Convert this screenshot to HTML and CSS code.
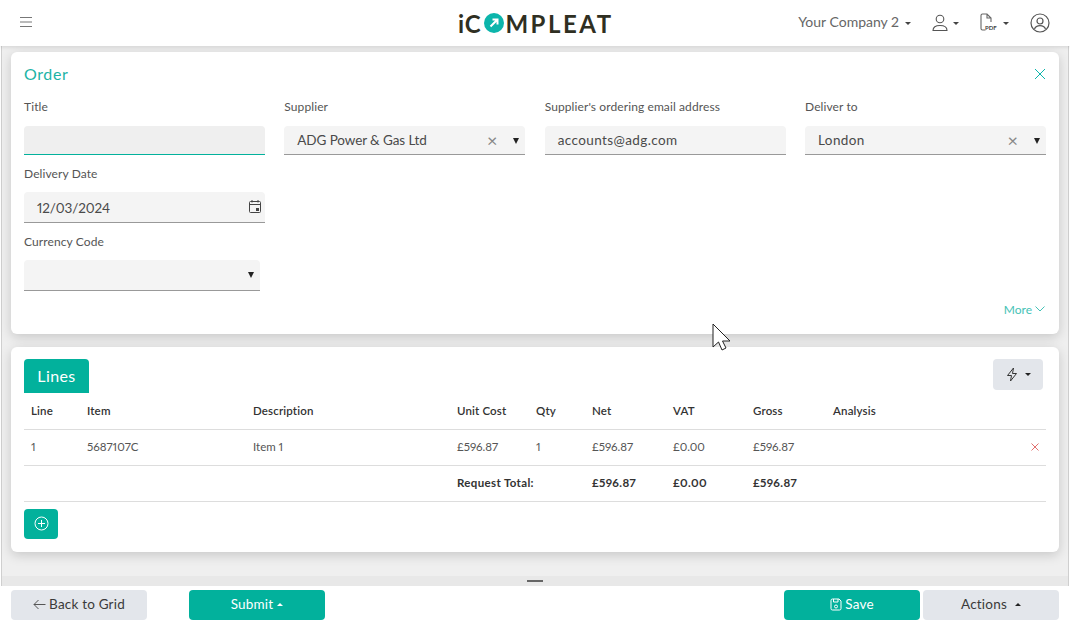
FILE: index.html
```html
<!DOCTYPE html>
<html lang="en">
<head>
<meta charset="utf-8">
<title>iCompleat Order</title>
<link rel="stylesheet" href="styles.css">
</head>
<body>
<header class="topbar">
  <svg class="menu-icon" width="14" height="12" viewBox="0 0 14 12"><path d="M1 1.500h12M1 6h12M1 10.500h12" stroke="#777" fill="none"/></svg>
  <div class="logo"><span class="logo-ic">iC</span><span class="logo-o"><svg width="20" height="20" viewBox="0 0 20 20"><circle cx="10" cy="10" r="10" fill="#0cb5ab"/><path d="M6.500 13.500 13 7M8.500 6.500H13.500V11.500" stroke="#fff" stroke-width="2" fill="none"/></svg></span><span>MPLEAT</span></div>
  <nav class="topnav">
    <span class="company">Your Company 2<i class="caret"></i></span>
    <span class="nav-icon nav-user"><svg width="16" height="18" viewBox="0 0 16 18"><circle cx="8" cy="5" r="3.800" fill="none" stroke="#555" stroke-width="1.100"/><path d="M1 16.500c0-3.500 2.500-5 7-5s7 1.500 7 5z" fill="none" stroke="#555" stroke-width="1.100"/></svg><i class="caret"></i></span>
    <span class="nav-icon nav-pdf"><svg width="16" height="19" viewBox="0 0 16 19"><path d="M6 17H2.500Q1 17 1 15.500V2.500Q1 1 2.500 1H7L11 5V9M7 1V5H11" fill="none" stroke="#666" stroke-width="1.100"/><rect x="5" y="12" width="10" height="5.500" fill="#fff"/></svg><b class="pdf-tag">PDF</b><i class="caret"></i></span>
    <svg class="profile" width="20" height="20" viewBox="0 0 20 20"><circle cx="10" cy="10" r="9" fill="none" stroke="#555" stroke-width="1.200"/><circle cx="10" cy="8" r="3" fill="none" stroke="#555" stroke-width="1.200"/><path d="M4.500 16c1-2.500 3-3.300 5.500-3.300s4.500.8 5.500 3.300" fill="none" stroke="#555" stroke-width="1.200"/></svg>
  </nav>
</header>

<main class="content">
  <section class="card card-order">
    <div class="card-head">
      <h2>Order</h2>
      <svg width="12" height="12" viewBox="0 0 12 12"><path d="M1 1l10 10M11 1L1 11" stroke="#0cb5ab" fill="none"/></svg>
    </div>
    <div class="fields">
      <div class="field">
        <label>Title</label>
        <div class="input input-active"></div>
      </div>
      <div class="field">
        <label>Supplier</label>
        <div class="input input-tight">ADG Power &amp; Gas Ltd<span class="clear">×</span><i class="select-arrow"></i></div>
      </div>
      <div class="field">
        <label>Supplier's ordering email address</label>
        <div class="input">accounts@adg.com</div>
      </div>
      <div class="field">
        <label>Deliver to</label>
        <div class="input">London<span class="clear">×</span><i class="select-arrow"></i></div>
      </div>
      <div class="field field-new-row">
        <label>Delivery Date</label>
        <div class="input input-tall input-tight">12/03/2024
          <svg class="calendar" width="12" height="13" viewBox="0 0 12 13"><rect x=".5" y="1.500" width="11" height="11" rx="1" fill="none" stroke="#444"/><path d="M.5 4.500h11M3 0v2.500M9 0v2.500" stroke="#444" fill="none"/><rect x="7" y="8" width="3" height="3" fill="#444"/></svg>
        </div>
      </div>
      <div class="field field-new-row field-narrow">
        <label>Currency Code</label>
        <div class="input input-tall"><i class="select-arrow"></i></div>
      </div>
    </div>
    <div class="more">More <svg width="10" height="6" viewBox="0 0 10 6"><path d="M.5.500 5 5 9.500.500" stroke="#45c2b6" fill="none"/></svg></div>
  </section>

  <section class="card card-lines">
    <div class="lines-head">
      <div class="tab">Lines</div>
      <button class="btn-flash" type="button">
        <svg width="12" height="15" viewBox="0 0 12 15"><path d="M7.500 1 1.500 8.500H5.500L4.500 14 10.500 6.500H6.500Z" fill="none" stroke="#333"/></svg><i class="caret caret-dark"></i>
      </button>
    </div>
    <table class="lines">
      <colgroup>
        <col class="c-line"><col class="c-item"><col class="c-desc"><col class="c-unit"><col class="c-qty"><col class="c-net"><col class="c-vat"><col class="c-gross"><col class="c-analysis"><col class="c-del">
      </colgroup>
      <thead>
        <tr><th>Line</th><th>Item</th><th>Description</th><th>Unit Cost</th><th>Qty</th><th>Net</th><th>VAT</th><th>Gross</th><th>Analysis</th><th></th></tr>
      </thead>
      <tbody>
        <tr><td>1</td><td>5687107C</td><td>Item 1</td><td>£596.87</td><td>1</td><td>£596.87</td><td>£0.00</td><td>£596.87</td><td></td><td class="del"><svg width="8" height="8" viewBox="0 0 8 8"><path d="M.5.500l7 7M7.500.500l-7 7" stroke="#e2706f" fill="none"/></svg></td></tr>
        <tr class="total"><td></td><td></td><td></td><td colspan="2">Request Total:</td><td>£596.87</td><td>£0.00</td><td>£596.87</td><td></td><td></td></tr>
      </tbody>
    </table>
    <button class="btn-add" type="button"><svg width="15" height="15" viewBox="0 0 15 15"><circle cx="7.500" cy="7.500" r="6.500" fill="none" stroke="#fff"/><path d="M7.500 4v7M4 7.500h7" stroke="#fff" fill="none"/></svg></button>
  </section>
</main>

<div class="splitter"><span></span></div>

<footer class="footer">
  <button class="btn btn-grey btn-back" type="button"><svg width="13" height="11" viewBox="0 0 13 11"><path d="M12.500 5.500H1M5.500 1 1 5.500 5.500 10" stroke="#555" fill="none"/></svg>Back to Grid</button>
  <button class="btn btn-teal btn-submit" type="button">Submit<i class="caret caret-up"></i></button>
  <button class="btn btn-teal btn-save" type="button"><svg width="12" height="13" viewBox="0 0 12 13"><path d="M1 2.500Q1 1 2.500 1H9L11 3V10.500Q11 12 9.500 12H2.500Q1 12 1 10.500ZM3.500 1V4H8V1" fill="none" stroke="#fff"/><circle cx="6" cy="8.500" r="1.500" fill="none" stroke="#fff"/></svg>Save</button>
  <button class="btn btn-grey btn-actions" type="button">Actions<i class="caret caret-up caret-dark"></i></button>
</footer>

<svg class="cursor" width="20" height="28" viewBox="0 0 20 28"><path d="M1 1V24L6.500 19 10 27 14 25 10.500 18H18Z" fill="#fff" stroke="#222"/></svg>
</body>
</html>
```
FILE: styles.css
```css
* { box-sizing: border-box; }
html, body { margin: 0; height: 100%; }
body {
  width: 1070px;
  height: 624px;
  overflow: hidden;
  display: flex;
  flex-direction: column;
  position: relative;
  background: #fff;
  font-family: Lato, "Open Sans", sans-serif;
  font-size: 13.500px;
  font-variant-numeric: proportional-nums;
  color: #4a4a4a;
}
i { display: inline-block; }

.topbar {
  height: 46px;
  flex: none;
  display: flex;
  align-items: center;
  position: relative;
  z-index: 2;
  padding: 0 20px 0 19px;
  background: #fff;
  box-shadow: 0 1px 4px rgba(0,0,0,.12);
}
.menu-icon { flex: none; margin-top: -3px; }
.logo {
  position: absolute;
  left: 458px;
  top: 9px;
  display: flex;
  align-items: center;
  height: 28px;
  font-size: 24px;
  font-weight: 700;
  color: #2f2f22;
  letter-spacing: 2.500px;
}
.logo-ic { letter-spacing: .8px; margin-right: 3px; }
.logo-o { display: flex; margin-right: 1px; }
.topnav {
  margin-left: auto;
  display: flex;
  align-items: center;
  color: #666;
}
.company { font-size: 14px; margin-right: 21px; margin-top: -3px; }
.caret {
  width: 0;
  height: 0;
  margin-left: 6px;
  vertical-align: 2px;
  border: 3.500px solid transparent;
  border-top-color: #444;
  border-bottom: 0;
}
.caret-dark { border-top-color: #222; }
.caret-up {
  border-top: 0;
  border-bottom: 3.500px solid #fff;
  vertical-align: 3px;
  margin-left: 4px;
}
.caret-up.caret-dark { border-bottom-color: #222; margin-left: 8px; }
.nav-icon { display: flex; align-items: center; position: relative; margin-top: -1px; }
.nav-user { margin-right: 21px; }
.nav-pdf { margin-right: 21px; }
.nav-icon .caret { margin-left: 5px; margin-top: 1px; }
.pdf-tag {
  position: absolute;
  left: 5px;
  top: 11px;
  font-size: 6px;
  line-height: 7px;
  color: #444;
}
.nav-pdf .caret { margin-left: 7px; }

.content {
  flex: none;
  height: 530px;
  margin: 0 1px;
  padding: 6px 9px 0;
  border-left: 1px solid #cfcfcf;
  border-right: 1px solid #cfcfcf;
  background: #efefef;
}
.card {
  background: #fff;
  border-radius: 6px;
  padding-left: 13px;
  padding-right: 13px;
  box-shadow: 0 3px 12px rgba(0,0,0,.17);
}
.card-order { height: 282px; padding-top: 12px; }
.card-lines { height: 205px; margin-top: 13px; padding-top: 12px; }

.card-head {
  height: 20px;
  margin-bottom: 13px;
  display: flex;
  align-items: center;
  justify-content: space-between;
}
.card-head h2 {
  margin: -2px 0 0;
  font-size: 16px;
  font-weight: 400;
  letter-spacing: .6px;
  color: #1cb3a6;
}
.fields {
  display: grid;
  grid-template-columns: repeat(4, 241px);
  column-gap: 19.330px;
  row-gap: 9px;
}
.field-new-row { grid-column: 1; }
.field-narrow { width: 236px; }
.field label {
  display: block;
  height: 20px;
  line-height: 20px;
  margin-bottom: 9px;
  font-size: 12px;
  letter-spacing: .1px;
  color: #555;
}
.field-new-row label { margin-bottom: 8px; }
.input {
  position: relative;
  height: 29px;
  padding-left: 13px;
  line-height: 28px;
  font-size: 13.500px;
  letter-spacing: .4px;
  color: #4a4a4a;
  background: #f4f4f4;
  border-bottom: 1px solid #999;
  border-radius: 4px 4px 0 0;
}
.input-tight { letter-spacing: -.1px; }
.input-tall { height: 31px; line-height: 32px; }
.input-active { background: #efefef; border-bottom-color: #02b19c; }
.clear {
  position: absolute;
  right: 28px;
  top: 0;
  font-size: 18px;
  color: #888;
  letter-spacing: 0;
}
.select-arrow {
  position: absolute;
  right: 6px;
  top: 12px;
  width: 0;
  height: 0;
  border: 3.500px solid transparent;
  border-top: 6px solid #222;
  border-bottom: 0;
}
.calendar { position: absolute; right: 4px; top: 8px; }
.more {
  height: 18px;
  margin-top: 9px;
  display: flex;
  justify-content: flex-end;
  align-items: center;
  gap: 3px;
  padding-right: 1px;
  font-size: 12px;
  color: #45c2b6;
}

.lines-head {
  height: 34px;
  display: flex;
  justify-content: space-between;
  align-items: flex-start;
  padding-right: 3px;
}
.tab {
  width: 65px;
  height: 34px;
  line-height: 34px;
  text-align: center;
  font-size: 16px;
  letter-spacing: .4px;
  color: #fff;
  background: #02b19c;
  border-radius: 4px 4px 0 0;
}
.btn-flash {
  width: 50px;
  height: 31px;
  padding: 0;
  display: flex;
  align-items: center;
  justify-content: center;
  background: #e3e6eb;
  border: 0;
  border-radius: 4px;
}
.btn-flash .caret { margin-left: 7px; }

.lines {
  width: 1022px;
  table-layout: fixed;
  border-collapse: collapse;
  font-size: 11.500px;
}
.c-line { width: 56px; }
.c-item { width: 166px; }
.c-desc { width: 204px; }
.c-unit { width: 79px; }
.c-qty { width: 56px; }
.c-net { width: 81px; }
.c-vat { width: 80px; }
.c-gross { width: 80px; }
.c-analysis { width: 200px; }
.lines th, .lines td {
  padding: 0 0 0 7px;
  text-align: left;
  border-bottom: 1px solid #ddd;
}
.lines th { height: 36px; font-weight: 600; color: #333; letter-spacing: .15px; }
.lines td { height: 36px; padding-bottom: 2px; color: #555; }
.lines .total td { font-weight: 700; color: #333; letter-spacing: .35px; }
.lines .del { padding-left: 5px; }
.btn-add {
  display: flex;
  align-items: center;
  justify-content: center;
  width: 34px;
  height: 30px;
  margin-top: 7px;
  padding: 0;
  background: #02b19c;
  border: 0;
  border-radius: 4px;
}

.splitter {
  flex: none;
  height: 10px;
  margin: 0 1px;
  display: flex;
  justify-content: center;
  align-items: center;
  background: #e8e8e8;
  border-left: 1px solid #cfcfcf;
  border-right: 1px solid #cfcfcf;
}
.splitter span { width: 16px; height: 2px; background: #666; }

.footer {
  flex: none;
  height: 38px;
  padding: 4px 11px;
  display: flex;
  align-items: flex-start;
}
.btn {
  display: flex;
  align-items: center;
  justify-content: center;
  width: 136px;
  height: 30px;
  padding: 0 0 2px;
  border: 0;
  border-radius: 4px;
  font-family: inherit;
  font-size: 13.500px;
  letter-spacing: .2px;
}
.btn-grey { background: #e3e6eb; color: #3a3a3a; }
.btn-teal { background: #02b19c; color: #fff; }
.btn-back svg { margin-right: 3px; }
.btn-submit { margin-left: 42px; }
.btn-save { margin-left: auto; gap: 3px; }
.btn-actions { margin-left: 3px; }

.cursor { position: absolute; left: 712px; top: 323px; }
```
